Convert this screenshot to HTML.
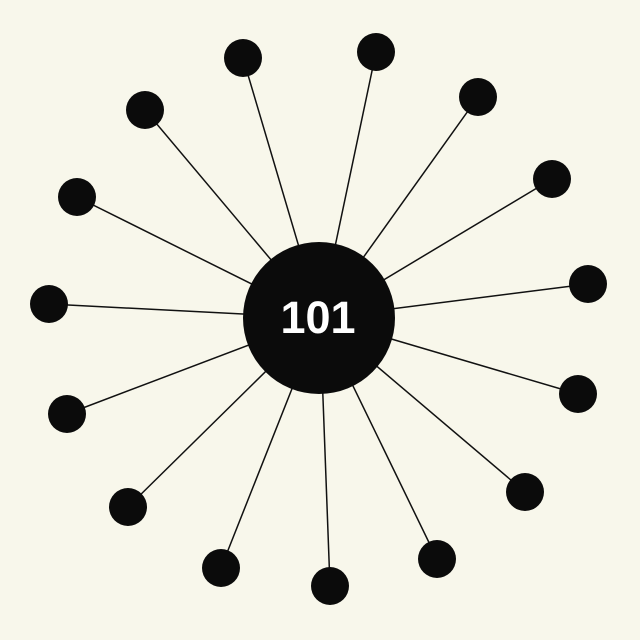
<!DOCTYPE html>
<html><head><style>
html,body{margin:0;padding:0;background:#f8f7eb;}
svg{display:block}
</style></head><body>
<svg width="640" height="640" viewBox="0 0 640 640">
<rect width="640" height="640" fill="#f8f7eb"/>
<g stroke="#111" stroke-width="1.5">
<line x1="320" y1="318" x2="243" y2="58"/>
<line x1="320" y1="318" x2="376" y2="52"/>
<line x1="320" y1="318" x2="478" y2="97"/>
<line x1="320" y1="318" x2="552" y2="179"/>
<line x1="320" y1="318" x2="588" y2="284"/>
<line x1="320" y1="318" x2="578" y2="394"/>
<line x1="320" y1="318" x2="525" y2="492"/>
<line x1="320" y1="318" x2="437" y2="559"/>
<line x1="320" y1="318" x2="330" y2="586"/>
<line x1="320" y1="318" x2="221" y2="568"/>
<line x1="320" y1="318" x2="128" y2="507"/>
<line x1="320" y1="318" x2="67" y2="414"/>
<line x1="320" y1="318" x2="49" y2="304"/>
<line x1="320" y1="318" x2="77" y2="197"/>
<line x1="320" y1="318" x2="145" y2="110"/>
</g>
<g fill="#0b0b0b">
<circle cx="243" cy="58" r="19"/>
<circle cx="376" cy="52" r="19"/>
<circle cx="478" cy="97" r="19"/>
<circle cx="552" cy="179" r="19"/>
<circle cx="588" cy="284" r="19"/>
<circle cx="578" cy="394" r="19"/>
<circle cx="525" cy="492" r="19"/>
<circle cx="437" cy="559" r="19"/>
<circle cx="330" cy="586" r="19"/>
<circle cx="221" cy="568" r="19"/>
<circle cx="128" cy="507" r="19"/>
<circle cx="67" cy="414" r="19"/>
<circle cx="49" cy="304" r="19"/>
<circle cx="77" cy="197" r="19"/>
<circle cx="145" cy="110" r="19"/>
<circle cx="319" cy="318" r="76"/>
</g>
<text x="318" y="333" text-anchor="middle" font-family="Liberation Sans, sans-serif" font-weight="bold" font-size="45" fill="#fff">101</text>
</svg>
</body></html>
